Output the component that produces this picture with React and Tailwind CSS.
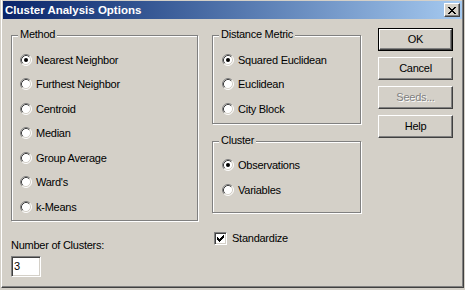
import React from 'react';

const CHECK = ['......X', '.....XX', 'X...XXX', 'XX.XXX.', 'XXXXX..', '.XXX...', '..X....'];
const CLOSE_X = ['XX....XX', '.XX..XX.', '..XXXX..', '...XX...', '..XXXX..', '.XX..XX.', 'XX....XX'];

const Pixels = ({ rows, color = '#000' }) => (
    <svg width={rows[0].length} height={rows.length} shapeRendering="crispEdges" className="shrink-0">
        {rows.flatMap((row, y) =>
            [...row].map((c, x) =>
                c === 'X' ? <rect key={`${x}-${y}`} x={x} y={y} width="1" height="1" fill={color} /> : null
            )
        )}
    </svg>
);

const Radio = ({ checked }) => (
    <svg width="12" height="12" viewBox="0 0 12 12" className="shrink-0">
        <circle cx="6" cy="6" r="5" fill="#fff" />
        <path d="M2.11 9.89A5.5 5.5 0 0 1 9.89 2.11" stroke="#808080" fill="none" />
        <path d="M9.89 2.11A5.5 5.5 0 0 1 2.11 9.89" stroke="#fff" fill="none" />
        <path d="M2.82 9.18A4.5 4.5 0 0 1 9.18 2.82" stroke="#404040" fill="none" />
        <path d="M9.18 2.82A4.5 4.5 0 0 1 2.82 9.18" stroke="#d4d0c8" fill="none" />
        {checked && <circle cx="6" cy="6" r="2" fill="#000" />}
    </svg>
);

const RadioRow = ({ label, checked, className = '' }) => (
    <div className={`flex h-4 items-center gap-[4px] ${className}`}>
        <Radio checked={checked} />
        <span className="leading-[13px] whitespace-nowrap">{label}</span>
    </div>
);

const GroupBox = ({ title, className = '', children }) => (
    <div className={`relative border border-[#808080] shadow-[inset_1px_1px_0_#fff,1px_1px_0_#fff] ${className}`}>
        <span className="absolute -top-[8px] left-[6px] bg-[#d4d0c8] px-[2px] leading-[13px] whitespace-nowrap">{title}</span>
        {children}
    </div>
);

const Button = ({ label, disabled }) => (
    <div className="flex h-[23px] w-[75px] items-center justify-center border border-t-white border-l-white border-r-[#404040] border-b-[#404040] shadow-[inset_-1px_-1px_0_#808080]">
        <span className={disabled ? 'text-[#808080] [text-shadow:1px_1px_0_#fff] leading-[13px]' : 'leading-[13px]'}>{label}</span>
    </div>
);

const methods = [
    { label: 'Nearest Neighbor', checked: true, mt: '' },
    { label: 'Furthest Neighbor', mt: 'mt-[8px]' },
    { label: 'Centroid', mt: 'mt-[9px]' },
    { label: 'Median', mt: 'mt-[8px]' },
    { label: 'Group Average', mt: 'mt-[9px]' },
    { label: "Ward's", mt: 'mt-[8px]' },
    { label: 'k-Means', mt: 'mt-[9px]' },
];

const metrics = [
    { label: 'Squared Euclidean', checked: true, mt: '' },
    { label: 'Euclidean', mt: 'mt-[8px]' },
    { label: 'City Block', mt: 'mt-[9px]' },
];

const App = () => {
    return (
        <div className="w-[465px] h-[290px] bg-[#d4d0c8] font-['Liberation_Sans',Arial,sans-serif] text-[11px] tracking-[-0.25px] text-black overflow-hidden">
            <div className="ml-px flex h-[288px] w-[463px] flex-col border-l border-r border-b border-l-white border-r-[#404040] border-b-[#404040] px-px pt-px shadow-[inset_-1px_-1px_0_#808080]">
                {/* title bar */}
                <div className="flex h-[18px] shrink-0 items-center bg-linear-to-r from-[#0a246a] to-[#a6caf0] px-[2px]">
                    <span className="flex-1 text-[11.5px] font-bold leading-[13px] tracking-normal text-white whitespace-nowrap">Cluster Analysis Options</span>
                    <div className="flex h-[14px] w-[16px] items-center justify-center border border-t-white border-l-white border-r-[#404040] border-b-[#404040] bg-[#d4d0c8] shadow-[inset_-1px_-1px_0_#808080]">
                        <Pixels rows={CLOSE_X} />
                    </div>
                </div>

                {/* body */}
                <div className="flex pl-[8px]">
                    <div className="flex w-[188px] flex-col">
                        <GroupBox title="Method" className="mt-[16px] h-[186px] w-[187px] pl-[8px] pt-[16px]">
                            {methods.map((m) => (
                                <RadioRow key={m.label} label={m.label} checked={m.checked} className={m.mt} />
                            ))}
                        </GroupBox>
                        <span className="mt-[18px] leading-[13px]">Number of Clusters:</span>
                        <div className="mt-[4px] flex h-[21px] w-[30px] items-center border border-t-[#808080] border-l-[#808080] border-r-white border-b-white bg-white pl-[2px] shadow-[inset_1px_1px_0_#404040,inset_-1px_-1px_0_#d4d0c8]">
                            <span className="leading-[13px]">3</span>
                        </div>
                    </div>

                    <div className="ml-[13px] flex w-[150px] flex-col">
                        <GroupBox title="Distance Metric" className="mt-[16px] h-[89px] w-[149px] pl-[9px] pt-[16px]">
                            {metrics.map((m) => (
                                <RadioRow key={m.label} label={m.label} checked={m.checked} className={m.mt} />
                            ))}
                        </GroupBox>
                        <GroupBox title="Cluster" className="mt-[17px] h-[72px] w-[149px] pl-[9px] pt-[15px]">
                            <RadioRow label="Observations" checked />
                            <RadioRow label="Variables" className="mt-[9px]" />
                        </GroupBox>
                        <div className="mt-[19px] flex h-[13px] items-center gap-[5px] pl-[2px]">
                            <div className="flex h-[13px] w-[13px] shrink-0 items-center justify-center border border-t-[#808080] border-l-[#808080] border-r-white border-b-white bg-white shadow-[inset_1px_1px_0_#404040,inset_-1px_-1px_0_#d4d0c8]">
                                <Pixels rows={CHECK} />
                            </div>
                            <span className="leading-[13px]">Standardize</span>
                        </div>
                    </div>

                    <div className="ml-[16px] mt-[9px] flex flex-col gap-[6px]">
                        <div className="h-[23px] w-[75px] border border-black">
                            <div className="flex h-[21px] w-[73px] items-center justify-center border border-t-white border-l-white border-r-[#404040] border-b-[#404040] shadow-[inset_-1px_-1px_0_#808080]">
                                <span className="leading-[13px]">OK</span>
                            </div>
                        </div>
                        <Button label="Cancel" />
                        <Button label="Seeds..." disabled />
                        <Button label="Help" />
                    </div>
                </div>
            </div>
        </div>
    );
};

export default App;
